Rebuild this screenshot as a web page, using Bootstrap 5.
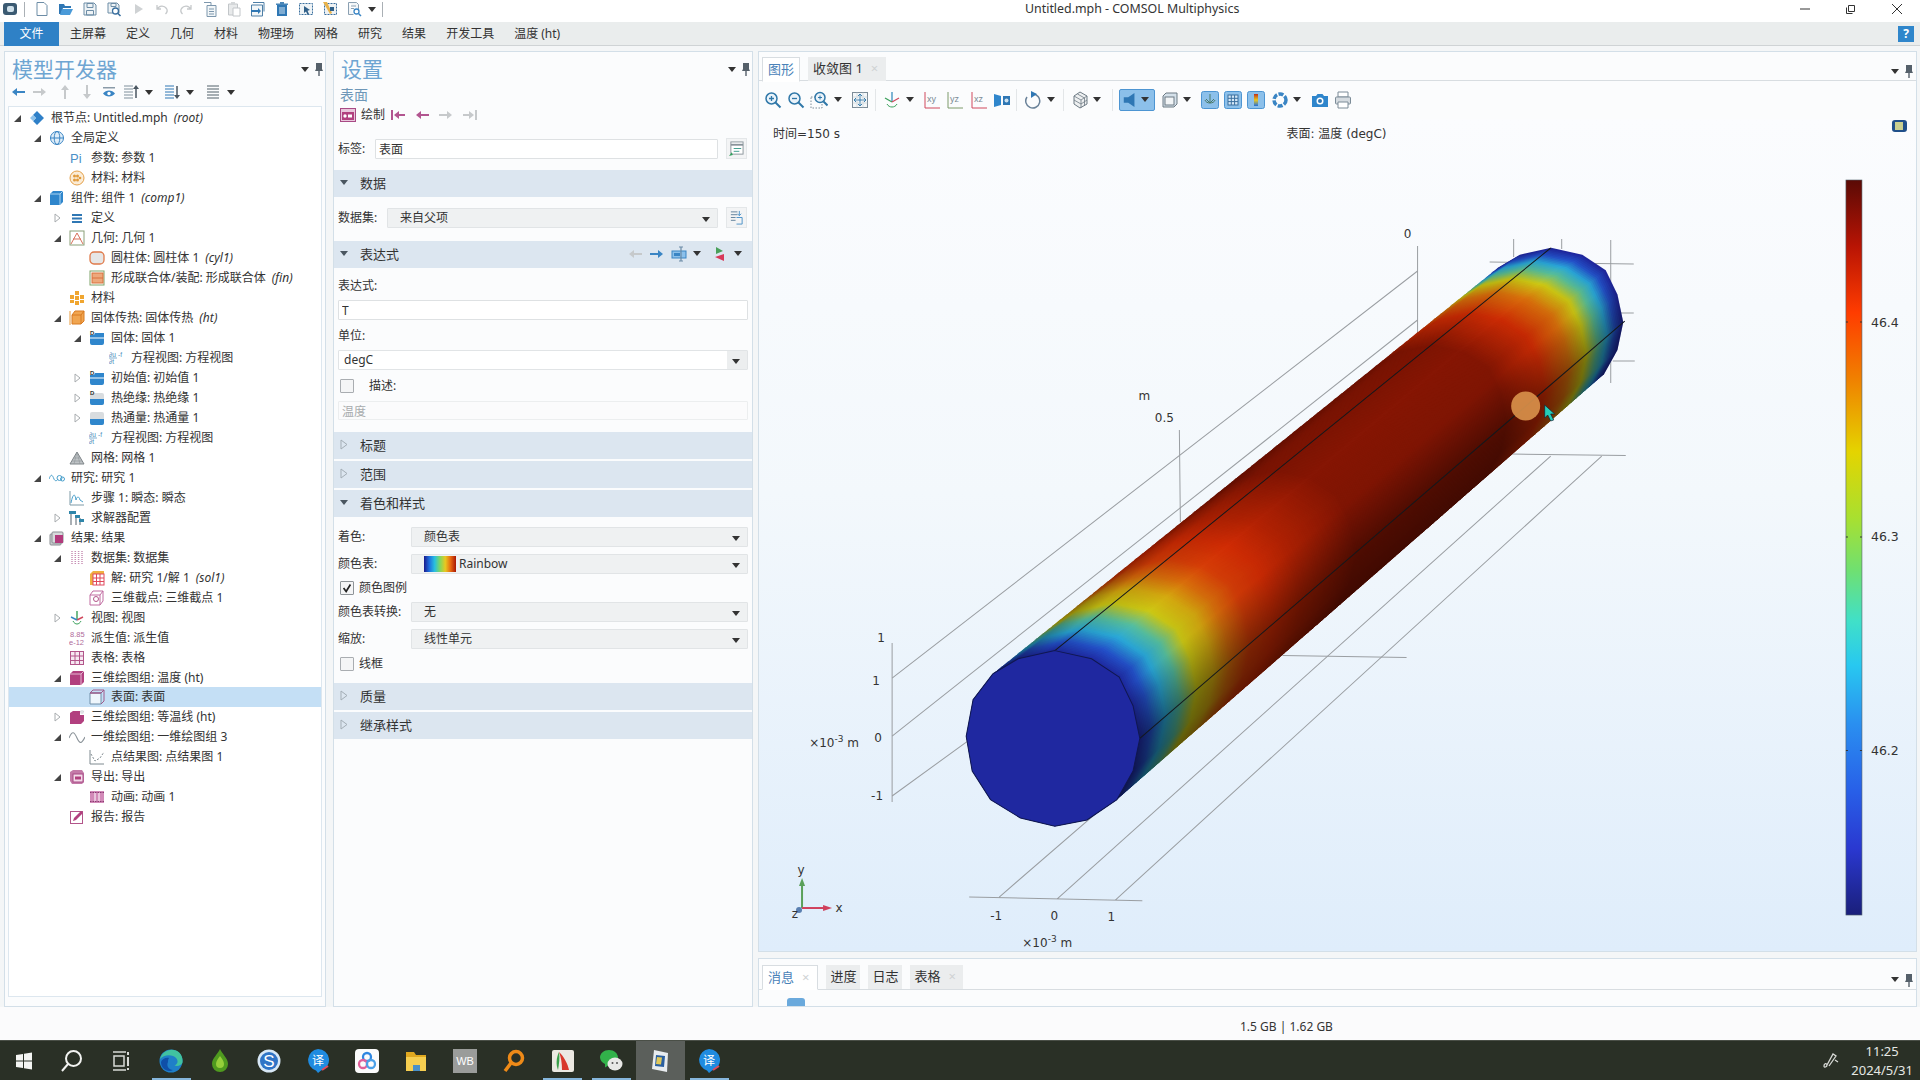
<!DOCTYPE html>
<html lang="zh">
<head>
<meta charset="UTF-8">
<title>Untitled.mph - COMSOL Multiphysics</title>
<link href="https://cdn.jsdelivr.net/npm/bootstrap@5.3.3/dist/css/bootstrap.min.css" rel="stylesheet">
<style>
    html, body { height: 100%; }
    body {
        margin: 0; width: 1920px; height: 1080px; overflow: hidden;
        background: #f4f6f7; color: #333; font-size: 12px; line-height: 20px;
        font-family: "Noto Sans", "Noto Sans CJK SC", sans-serif;
    }
    svg { display: block; flex: none; }
    .c-blue { color: #3a85c4; } .c-grey { color: #c6c9cb; } .c-pink { color: #b25590; } .c-dark { color: #55606a; }
    .cs-caret { width: 0; height: 0; flex: none; border: 4px solid transparent; border-top: 5px solid #333; border-bottom: 0; }

    /* window chrome */
    .cs-title { height: 22px; background: #fff; padding-bottom: 4px; font-size: 12.4px; }
    .cs-quick { width: 1025px; padding-left: 2px; gap: 8px; }
    .cs-quick svg { width: 16px; height: 16px; }
    .cs-quick .cs-sep { width: 1px; height: 15px; background: #aab0b5; margin: 0 1px 0 -2px; }
    .cs-winbtn { width: 46px; }
    .cs-ribbon { height: 24px; background: #eaeded; border-bottom: 1px solid #cfd3d5; padding-left: 4px; flex-wrap: nowrap; }
    .cs-ribbon .nav-link { padding: 0 10px; color: #333; line-height: 24px; font-size: 12px; }
    .cs-ribbon .nav-link.active { background: #2f81c6; color: #fff; width: 55px; text-align: center; margin-right: 1px; }
    .cs-help { width: 16px; height: 16px; background: #2f86cb; color: #fff; line-height: 16px; text-align: center; font-weight: 700; font-size: 12px; margin-right: 6px; }

    /* panes */
    .cs-main { padding: 5px 3px 0 4px; min-height: 0; }
    .cs-pane { background: #fbfcfd; border: 1px solid #d3dfe8; border-radius: 0; }
    .cs-model { width: 322px; }
    .cs-settings { width: 420px; margin-left: 7px; }
    .cs-right { margin-left: 5px; min-width: 0; }
    .cs-head { height: 31px; padding: 3px 1px 0 7px; }
    .cs-head h2 { font-size: 21px; line-height: 28px; margin: 0; color: #6ea5d2; font-weight: 400; }
    .cs-pin { width: 10px; height: 14px; margin-left: 5px; }
    .cs-tool { height: 18px; padding-left: 5px; gap: 6px; }
    .cs-tool svg { width: 16px; height: 16px; }
    .g3 { margin-left: 3px; } .g5 { margin-left: 5px; } .g1n { margin-left: -2px; }

    /* model tree */
    .cs-treebox { margin: 5px 3px 9px 3px; background: #fff; border: 1px solid #dde7ef; }
    .cs-tree { padding-top: 1px; }
    .cs-tree .list-group-item {
        display: flex; align-items: center; height: 20px; padding: 0 0 0 3px; border: 0;
        background: transparent; color: #333; white-space: nowrap; font-size: 12px; line-height: 20px;
    }
    .cs-tree .list-group-item.active { background: #c4dff5; color: #333; }
    .cs-tree em { margin-left: 6px; }
    .tw { width: 10px; height: 10px; margin-right: 7px; flex: none; }
    .ic { width: 16px; height: 16px; margin-right: 6px; }
    .cs-tree .lv1 { padding-left: 23px; } .cs-tree .lv2 { padding-left: 43px; }
    .cs-tree .lv3 { padding-left: 63px; } .cs-tree .lv4 { padding-left: 83px; }

    /* settings */
    .cs-sub { color: #6e97b8; font-size: 14px; line-height: 16px; padding: 4px 0 0 6px; }
    .cs-drawbar { height: 20px; padding-left: 6px; margin-top: 2px; gap: 5px; }
    .cs-drawbar svg { width: 16px; height: 16px; }
    .cs-form { padding: 0 4px 0 4px; }
    .cs-lab { flex: none; color: #333; line-height: 20px; }
    .cs-cap { line-height: 18px; }
    .w37 { width: 37px; } .w49 { width: 49px; } .w73 { width: 73px; }
    .cs-input.form-control, .cs-input.form-select {
        height: 20px; min-height: 0; padding: 0 3px; font-size: 12px; line-height: 18px; color: #333;
        border: 1px solid #dee1e3; border-radius: 1px; background-color: #fff;
    }
    .cs-input.form-select {
        position: relative; padding-left: 12px; background-image: none;
        background: #eff1f2; border-color: #e1e4e6; display: flex; align-items: center;
    }
    .cs-input.form-select.white { background: #fff; padding-left: 5px; }
    .cs-input .cs-caret { position: absolute; right: 7px; top: 8px; }
    .cs-input.white::after { content: ""; position: absolute; right: 0; top: 0; bottom: 0; width: 20px; background: #eceeef; }
    .cs-input.white .cs-caret { z-index: 1; }
    .cs-input.form-control:disabled { background: #fbfbfc; color: #a8abad; border-color: #eceeef; opacity: 1; height: 19px; }
    .cs-side { width: 21px; height: 21px; flex: none; margin-left: 8px; margin-right: 1px; border: 1px solid #e4e7e9; background: #f3f4f5; display: flex; align-items: center; justify-content: center; }
    .cs-side svg { width: 15px; height: 15px; }
    .cs-sec { height: 27px; padding: 0 0 2px 5px; background: #dce6f0; color: #333; font-size: 13px; }
    .cs-sec .arrow-slot { width: 21px; flex: none; }
    .cs-sec .down { width: 0; height: 0; display: block; border: 4px solid transparent; border-top: 5px solid #4a5660; border-bottom: 0; margin-left: 1px; }
    .cs-sec svg.closed { width: 8px; height: 11px; margin-left: 1px; }
    .cs-sec + .cs-sec { margin-top: 2px; }
    .cs-sec .cs-tool { padding-right: 10px; }
    .cs-chk.form-check-input { width: 14px; height: 14px; margin: 0; flex: none; border: 1px solid #a9adb1; border-radius: 1px; background-color: #f4f5f6; }
    .cs-chk.form-check-input:checked { background-color: #f4f5f6; border-color: #8e9498; background-image: url("data:image/svg+xml,%3csvg xmlns='http://www.w3.org/2000/svg' viewBox='0 0 14 14'%3e%3cpath fill='none' stroke='%23222' stroke-width='2' d='M3 7l3 4 5-8'/%3e%3c/svg%3e"); }
    .cs-chkrow { height: 14px; padding-left: 6px; line-height: 14px; }
    .cs-chkrow label { margin-left: 5px; }
    .cs-chkrow label.far { margin-left: 15px; }
    .m5 { margin-top: 5px; } .m6 { margin-top: 6px; } .m7 { margin-top: 7px; } .m8 { margin-top: 8px; } .m9 { margin-top: 9px; }
    .m10 { margin-top: 10px; } .m11 { margin-top: 11px; } .m12 { margin-top: 12px; } .m13 { margin-top: 13px; } .m14 { margin-top: 14px; }
    .cs-rainbow { width: 32px; height: 16px; margin: 0 3px 0 0; background: linear-gradient(to right,#1a1a8c,#1f6fe0,#28c0e0,#7fd860,#e8c820,#e86810,#a81606); }

    /* tabs */
    .cs-tabs.nav-tabs { height: 29px; padding: 5px 0 0 3px; gap: 8px; border-bottom: 1px solid #d8dde1; position: relative; flex-wrap: nowrap; }
    .cs-tabs .nav-link { padding: 0 5px; height: 24px; line-height: 23px; border: 0; border-radius: 0; background: #ebedee; color: #333; font-size: 13px; margin: 0; }
    .cs-tabs .nav-link.active { background: #fff; color: #4a82b8; border: 1px solid #d8dde1; border-bottom-color: #fff; margin-bottom: -1px; height: 25px; }
    .cs-tabs .cs-x { color: #cfd2d4; margin: 0 3px 0 8px; font-size: 13px; }
    .cs-tabs .cs-pins { margin-left: auto; padding: 5px 2px 0 0; }
    .cs-gtool { height: 38px; padding-left: 5px; }
    .cs-gtool > * { flex: none; }
    .cs-gtool svg { width: 18px; height: 18px; }
    .cs-gtool .cs-sep { width: 1px; height: 22px; background: #e3e6e8; }
    .l4 { margin-left: 4px; } .l5 { margin-left: 5px; } .l6 { margin-left: 6px; } .l7 { margin-left: 7px; }
    .l8 { margin-left: 8px; } .l9 { margin-left: 9px; } .l10 { margin-left: 10px; } .l11 { margin-left: 11px; }
    .cs-on { background: #8cc0ea; border: 1px solid #4d95d2; border-radius: 2px; height: 22px; width: 36px; display: flex; align-items: center; justify-content: space-between; padding: 0 5px 0 2px; }
    .cs-on svg { width: 16px; }
    .cs-plot { min-height: 0; background: linear-gradient(to bottom,#fbfcfe 0%,#f3f8fc 45%,#dfedfb 100%); }
    .cs-plot svg { width: 100%; height: 100%; }
    .cs-plot text { font-family: "DejaVu Sans", "Noto Sans CJK SC", sans-serif; font-size: 12px; fill: #333; }
    .cs-plot text.big { font-size: 12.5px; }
    .cs-plot tspan.sup { font-size: 9px; }
    .cs-msgpane { height: 49px; margin-top: 6px; }
    .cs-msgpane .cs-tabs.nav-tabs { height: 31px; padding-top: 6px; }
    .cs-msgpane .nav-link:not(.active) { padding: 0 4px; }
    .cs-strip { height: 17px; position: relative; overflow: hidden; }
    .cs-strip i { position: absolute; left: 28px; top: 8px; width: 18px; height: 10px; background: #6aa9dc; border-radius: 3px 3px 0 0; }
    .cs-status { height: 33px; background: #fbfbfc; padding-left: 1240px; line-height: 40px; }

    /* taskbar */
    .cs-task { height: 40px; background: #2a3026; border-top: 1px solid #4a4f47; padding-left: 0; }
    .cs-ts { width: 48.9px; height: 39px; display: flex; align-items: center; justify-content: center; flex: none; position: relative; }
    .cs-ts svg { width: 24px; height: 24px; }
    .cs-ts.lead { width: 48px; }
    .cs-ts.first { margin-left: 3px; }
    .cs-ts.open::after { content: ""; position: absolute; left: 5px; right: 5px; bottom: 0; height: 2px; background: #86b6dc; }
    .cs-ts.cur { background: #5b5f5b; }
    .cs-clock { margin-left: auto; color: #e6e8e4; text-align: center; line-height: 19px; font-size: 13px; padding-right: 7px; }
    .cs-tray { width: 20px; height: 20px; margin-right: 10px; }
</style>
</head>
<body>

<!-- shared icons -->
<svg width="0" height="0" class="position-absolute">
  <defs>
    <symbol id="tw-o" viewBox="0 0 10 10"><path d="M9 2v7H2z" fill="#444"/></symbol>
    <symbol id="tw-c" viewBox="0 0 10 10"><path d="M3 1l5 4-5 4z" fill="#fff" stroke="#a8acaf"/></symbol>
    <symbol id="a-l" viewBox="0 0 16 16"><path d="M2 8l5-4v3h8v2H7v3z" fill="currentColor"/></symbol>
    <symbol id="a-r" viewBox="0 0 16 16"><path d="M14 8L9 4v3H1v2h8v3z" fill="currentColor"/></symbol>
    <symbol id="a-f" viewBox="0 0 16 16"><path d="M1 3h2v10H1zM4 8l5-4v3h6v2H9v3z" fill="currentColor"/></symbol>
    <symbol id="a-e" viewBox="0 0 16 16"><path d="M15 3h-2v10h2zM12 8L7 4v3H1v2h6v3z" fill="currentColor"/></symbol>
    <symbol id="a-u" viewBox="0 0 16 16"><path d="M8 1l4 5H9v9H7V6H4z" fill="currentColor"/></symbol>
    <symbol id="a-d" viewBox="0 0 16 16"><path d="M8 15l4-5H9V1H7v9H4z" fill="currentColor"/></symbol>
    <symbol id="pin" viewBox="0 0 10 14"><path d="M2 1h6v6l1 2H1l1-2zM4.300 9h1.400v5H4.300z" fill="#55606a"/></symbol>
    <!-- quick access -->
    <symbol id="q-app" viewBox="0 0 16 16"><rect x="1" y="2" width="14" height="12" rx="3" fill="#3b5a72"/><rect x="5" y="5" width="7" height="6" rx="2" fill="#cfe0ea"/></symbol>
    <symbol id="q-new" viewBox="0 0 16 16"><path d="M3 1.500h7l3 3v10H3z" fill="#fff" stroke="#6d8da6"/></symbol>
    <symbol id="q-open" viewBox="0 0 16 16"><path d="M1 3h5l1 2h6v2H5l-2 6H1z" fill="#2f77b4"/><path d="M4 8h11l-3 6H2z" fill="#4a9ad8"/></symbol>
    <symbol id="q-save" viewBox="0 0 16 16"><path d="M2 2h10l2 2v10H2z" fill="#eef3f6" stroke="#6d8da6"/><path d="M5 2.500h6v4H5zM4.500 9.500h7V14h-7z" fill="none" stroke="#6d8da6"/></symbol>
    <symbol id="q-saveas" viewBox="0 0 16 16"><path d="M2 2h9l2 2v8H2z" fill="#eef3f6" stroke="#6d8da6"/><path d="M5 2.500h5v3H5z" fill="none" stroke="#6d8da6"/><circle cx="9.500" cy="10" r="3" fill="#fff" stroke="#3a6f9e" stroke-width="1.300"/><path d="M11.500 12l3 3" stroke="#3a6f9e" stroke-width="1.600"/></symbol>
    <symbol id="q-run" viewBox="0 0 16 16"><path d="M5 3l8 5-8 5z" fill="#cfd2d4"/></symbol>
    <symbol id="q-undo" viewBox="0 0 16 16"><path d="M3 4v4h4M3.500 8C5 4.500 10 4 12.500 7.500c1.300 2 .5 4-1 5.500" fill="none" stroke="#c6c9cb" stroke-width="1.300"/></symbol>
    <symbol id="q-redo" viewBox="0 0 16 16"><path d="M13 4v4H9M12.500 8C11 4.500 6 4 3.500 7.500c-1.300 2-.5 4 1 5.500" fill="none" stroke="#c6c9cb" stroke-width="1.300"/></symbol>
    <symbol id="q-copy" viewBox="0 0 16 16"><path d="M2 1.500h7v3" fill="none" stroke="#7d97ad"/><path d="M5 4.500h9v11H5z" fill="#f2f6f8" stroke="#7d97ad"/><path d="M7 8h5M7 10.500h5M7 13h5" stroke="#7d97ad"/></symbol>
    <symbol id="q-paste" viewBox="0 0 16 16"><path d="M2.500 3h9v11h-9z" fill="#e8eaeb" stroke="#c2c6c9"/><rect x="5" y="1" width="4" height="3" fill="#d4d7d9"/><path d="M7 7h7v8H7z" fill="#fff" stroke="#c2c6c9"/></symbol>
    <symbol id="q-dup" viewBox="0 0 16 16"><path d="M3 1.500h11v9" fill="none" stroke="#4d7ea6"/><path d="M1.500 4h11v11h-11z" fill="#f2f6f8" stroke="#4d7ea6"/><path d="M1 9h7V7l3 3-3 3v-2H1z" fill="#2f77b4"/></symbol>
    <symbol id="q-del" viewBox="0 0 16 16"><path d="M3 4h10v11H3z" fill="#2f77b4"/><path d="M2 2.500h12V4H2zM6 1h4v1.500H6z" fill="#4a86b8"/><path d="M6 6v7M8 6v7M10 6v7" stroke="#cfe2f0"/></symbol>
    <symbol id="q-a" viewBox="0 0 16 16"><rect x="1.500" y="2.500" width="13" height="11" fill="#eef3f6" stroke="#3a6f9e" stroke-dasharray="2 1"/><path d="M6 5l6 4-2.500.7L11 13l-1.500.7L8 10.500 6 12z" fill="#2f5f88"/></symbol>
    <symbol id="q-b" viewBox="0 0 16 16"><rect x="2.500" y="2.500" width="12" height="11" fill="#eef1f3" stroke="#3a6f9e" stroke-dasharray="2 1"/><path d="M1 1l7 12 2-1-5-11z" fill="#e8b24a"/><rect x="8" y="6" width="4" height="4" fill="#2f5f88"/></symbol>
    <symbol id="q-c" viewBox="0 0 16 16"><path d="M2.500 1.500h8l2 2v5M2.500 1.500v12h5" fill="#f2f5f7" stroke="#8ba0b2"/><path d="M5 5h5M5 7.500h3" stroke="#8ba0b2"/><circle cx="10.500" cy="10.500" r="2.500" fill="#fff" stroke="#3a85c4" stroke-width="1.300"/><path d="M12.500 12.500l2.500 2.500" stroke="#3a85c4" stroke-width="1.500"/></symbol>
    <!-- model toolbar -->
    <symbol id="m-eye" viewBox="0 0 16 16"><path d="M2 3h12v1.500H2z" fill="#8a9ba8"/><path d="M2 9.500c3-4 9-4 12 0-3 4-9 4-12 0z" fill="#3a85c4"/><circle cx="8" cy="9.500" r="1.700" fill="#fff"/></symbol>
    <symbol id="m-ua" viewBox="0 0 16 16"><path d="M1 2h9M1 5h9M1 8h9M1 11h9M1 14h9" stroke="#7f8f9b"/><path d="M13 14V4" stroke="#4a5660" stroke-width="1.500"/><path d="M13 1l3 4h-6z" fill="#4a5660"/></symbol>
    <symbol id="m-da" viewBox="0 0 16 16"><path d="M1 2h9M1 5h9M1 8h9M1 11h9M1 14h9" stroke="#2f77b4"/><path d="M13 2v10" stroke="#4a5660" stroke-width="1.500"/><path d="M13 15l3-4h-6z" fill="#4a5660"/></symbol>
    <symbol id="m-ls" viewBox="0 0 16 16"><path d="M2 2h12M2 5h12M2 8h12M2 11h12M2 14h12" stroke="#8a949b" stroke-width="1.500"/></symbol>
    <!-- tree -->
    <symbol id="t-root" viewBox="0 0 16 16"><path d="M8 1l7 7-7 7-4-4 3-3-3-3z" fill="#2f80c8"/><path d="M4 5l3 3-3 3-3-3z" fill="#8ec2ea"/></symbol>
    <symbol id="t-globe" viewBox="0 0 16 16"><circle cx="8" cy="8" r="6.500" fill="#e0eef9" stroke="#3a85c4"/><ellipse cx="8" cy="8" rx="2.800" ry="6.500" fill="none" stroke="#3a85c4"/><path d="M1.500 8h13" stroke="#3a85c4"/></symbol>
    <symbol id="t-pi" viewBox="0 0 16 16"><text x="1" y="13" font-size="13" fill="#4a90c8" font-family="Liberation Sans">Pi</text></symbol>
    <symbol id="t-matc" viewBox="0 0 16 16"><circle cx="8" cy="8" r="7" fill="#fbecd6" stroke="#e5a14a"/><g fill="#e09a3a"><circle cx="5.500" cy="6" r="1.500"/><circle cx="8.500" cy="6" r="1.500"/><circle cx="11" cy="8" r="1.300"/><circle cx="5.500" cy="10" r="1.500"/><circle cx="8.500" cy="10" r="1.500"/></g></symbol>
    <symbol id="t-comp" viewBox="0 0 16 16"><path d="M4 1h10v11l-3 3H1V4z" fill="#2f86cc"/><path d="M1 4h10v11M11 4l3-3" fill="none" stroke="#a9d2f0"/></symbol>
    <symbol id="t-def" viewBox="0 0 16 16"><path d="M3 4h10v2H3zM3 7.500h10v2H3zM3 11h10v2H3z" fill="#2f77b4"/></symbol>
    <symbol id="t-geo" viewBox="0 0 16 16"><rect x="1" y="1" width="14" height="14" fill="#fff" stroke="#8aa078"/><path d="M2 14L8 3l6 11M4 9h8" fill="none" stroke="#d9705a"/></symbol>
    <symbol id="t-cyl" viewBox="0 0 16 16"><rect x="1" y="2" width="14" height="12" rx="4" fill="#e6e6e6" stroke="#e07a4a" stroke-width="1.300"/></symbol>
    <symbol id="t-uni" viewBox="0 0 16 16"><rect x="1" y="1" width="14" height="14" fill="#fff" stroke="#7fa46a"/><rect x="3" y="3" width="11" height="10" fill="#eda87c" stroke="#d9703c"/><path d="M3 8h11" stroke="#d9703c"/></symbol>
    <symbol id="t-matg" viewBox="0 0 16 16"><g fill="#f0a630"><rect x="1" y="5" width="4" height="4"/><rect x="6" y="1" width="4" height="4"/><rect x="6" y="6" width="4" height="4"/><rect x="6" y="11" width="4" height="4"/><rect x="11" y="5" width="4" height="4"/><rect x="1" y="10" width="4" height="3"/><rect x="11" y="10" width="4" height="3"/></g></symbol>
    <symbol id="t-ht" viewBox="0 0 16 16"><path d="M1 1v14" stroke="#e89a3a"/><path d="M6 1h9v10l-3 3H3V5z" fill="#f0a550" stroke="#d97a20"/><path d="M3 5h9v9M12 5l3-4" fill="none" stroke="#d97a20"/></symbol>
    <symbol id="t-dom" viewBox="0 0 16 16"><path d="M1 5h4l1-2h9v10a2 2 0 0 1-2 2H3a2 2 0 0 1-2-2z" fill="#2f86cc"/><path d="M1 8h14" stroke="#fff"/><text x="1" y="5" font-size="6" font-weight="700" fill="#333" font-family="Liberation Sans">D</text></symbol>
    <symbol id="t-domb" viewBox="0 0 16 16"><rect x="1" y="3" width="14" height="12" rx="2" fill="#d8dcdf"/><path d="M1 9h14v4a2 2 0 0 1-2 2H3a2 2 0 0 1-2-2z" fill="#2f86cc"/><text x="1" y="5" font-size="6" font-weight="700" fill="#333" font-family="Liberation Sans">D</text></symbol>
    <symbol id="t-domc" viewBox="0 0 16 16"><rect x="1" y="2" width="14" height="13" rx="2" fill="#d8dcdf"/><path d="M1 9h14v4a2 2 0 0 1-2 2H3a2 2 0 0 1-2-2z" fill="#2f86cc"/></symbol>
    <symbol id="t-eq" viewBox="0 0 16 16"><g font-size="6.500" fill="#4a8dbb" font-family="Liberation Sans"><text x="0" y="7">∂u</text><text x="0" y="14">∂t</text><text x="9" y="7">-f</text></g><path d="M0 8h8" stroke="#4a8dbb" stroke-width=".7"/></symbol>
    <symbol id="t-mesh" viewBox="0 0 16 16"><path d="M8 2l7 12H1z" fill="#bfc3c6" stroke="#7f8589"/><path d="M4.500 8h7M3 11h10M8 2l-3 12M8 2l3 12" stroke="#8f9599" stroke-width=".6" fill="none"/></symbol>
    <symbol id="t-study" viewBox="0 0 16 16"><path d="M0 9c2-5 3-5 5 0 1 2.500 3 2 4 0" fill="none" stroke="#4aa0cc"/><circle cx="10.500" cy="8" r="2.500" fill="none" stroke="#4aa0cc"/><circle cx="13.500" cy="9" r="2" fill="none" stroke="#4aa0cc"/></symbol>
    <symbol id="t-step" viewBox="0 0 16 16"><path d="M1 1v14h14" fill="none" stroke="#7f9aa6"/><path d="M2 13C4 3 6 3 7 10c1-4 3-4 4 0l3 2" fill="none" stroke="#4aa0cc"/></symbol>
    <symbol id="t-solv" viewBox="0 0 16 16"><path d="M2 1v14M7 5v10M11 8v7" stroke="#55606a"/><path d="M0 1h7v3H0zM6 5h5v3H6zM10 9h5v3h-5z" fill="#2f86aa"/></symbol>
    <symbol id="t-res" viewBox="0 0 16 16"><rect x="1" y="4" width="11" height="11" rx="1" fill="#c9ccce" stroke="#8a8f93"/><rect x="3" y="2" width="11" height="11" rx="1" fill="#d8dadc" stroke="#8a8f93"/><rect x="6" y="5" width="8" height="8" fill="#b23a7c"/></symbol>
    <symbol id="t-ds" viewBox="0 0 16 16"><g stroke="#c78fb4" stroke-dasharray="1 1" stroke-width="1.500"><path d="M3 1v14M6.300 1v14M9.600 1v14M13 1v14"/></g></symbol>
    <symbol id="t-sol" viewBox="0 0 16 16"><path d="M1 4l3-3h11v11l-3 3H1z" fill="#f0b040"/><rect x="4" y="4" width="11" height="11" fill="#fff" stroke="#e0485c"/><path d="M4 8h11M4 11.500h11M7.500 4v11M11 4v11" stroke="#e0485c"/></symbol>
    <symbol id="t-cut" viewBox="0 0 16 16"><path d="M4 1h10v10l-3 4H1V5z" fill="#fff" stroke="#c06aa0"/><path d="M1 5h10v10M11 5l3-4" fill="none" stroke="#c06aa0"/><circle cx="7" cy="9" r="2.500" fill="none" stroke="#b2558a"/></symbol>
    <symbol id="t-view" viewBox="0 0 16 16"><path d="M8 1v9" stroke="#3aa05a" stroke-width="1.400"/><path d="M8 10l6-3" stroke="#d0485c" stroke-width="1.400"/><path d="M8 10L2 7" stroke="#3a85c4" stroke-width="1.400"/><path d="M4 11c2 4 6 4 8 0" fill="none" stroke="#3aa05a"/></symbol>
    <symbol id="t-der" viewBox="0 0 16 16"><g font-size="7.500" fill="#b06a9a" font-family="Liberation Sans"><text x="1" y="7">8.85</text><text x="0" y="15">e-12</text></g></symbol>
    <symbol id="t-tbl" viewBox="0 0 16 16"><rect x="1.500" y="1.500" width="13" height="13" fill="#f6e8f1" stroke="#b2558a"/><path d="M1.500 6h13M1.500 10.500h13M6 1.500v13M10.500 1.500v13" stroke="#b2558a"/></symbol>
    <symbol id="t-p3" viewBox="0 0 16 16"><path d="M4 1h11v11l-3 3H1V4z" fill="#b2407f"/><path d="M1 4h11v11M12 4l3-3" fill="none" stroke="#e3b6d0"/></symbol>
    <symbol id="t-sf" viewBox="0 0 16 16"><path d="M1 4h11v11H1z" fill="#eef6fc" stroke="#6e8ea8"/><path d="M1 4l3-3h11v11l-3 3M12 4l3-3" fill="none" stroke="#a05a8a"/><path d="M1 4h11" stroke="#a05a8a" stroke-width="1.400"/></symbol>
    <symbol id="t-pc" viewBox="0 0 16 16"><path d="M4 2h7v4h4v6l-3 3H1V4z" fill="#b2407f"/><path d="M11 2l2 2 2-2" stroke="#9a9a9a" fill="none"/><circle cx="13" cy="3" r="2" fill="#dfe3e6"/></symbol>
    <symbol id="t-w1" viewBox="0 0 16 16"><path d="M0 9c3-7 5-7 8 0s5 5 8-1" fill="none" stroke="#8a9298" stroke-width="1.100"/></symbol>
    <symbol id="t-pt" viewBox="0 0 16 16"><path d="M1 1v14h14" fill="none" stroke="#7f8a90"/><path d="M2 5l4 7 5-3 4-6" fill="none" stroke="#7f8a90" stroke-dasharray="2 1.500"/></symbol>
    <symbol id="t-exp" viewBox="0 0 16 16"><path d="M1 3l3-2h9l2 3v9l-2 2H3l-2-3z" fill="#c47aa8"/><rect x="4" y="5" width="10" height="8" fill="#f4dbe9" stroke="#a84a85"/><path d="M6 7.500h6v3H6z" fill="#b2407f"/></symbol>
    <symbol id="t-anim" viewBox="0 0 16 16"><rect x="1" y="2" width="14" height="12" fill="#d28ab8"/><path d="M6 4v8M10 4v8" stroke="#fff"/><path d="M1 3.500h14M1 12.500h14" stroke="#8a3a72" stroke-dasharray="1.500 1"/></symbol>
    <symbol id="t-rep" viewBox="0 0 16 16"><rect x="1.500" y="2.500" width="12" height="12" fill="#fff" stroke="#b2558a"/><path d="M4 12l1-3 7-7 2 2-7 7z" fill="#b2407f"/></symbol>
    <!-- settings -->
    <symbol id="s-plot" viewBox="0 0 16 16"><rect x=".5" y="1.500" width="15" height="13" fill="#e9c7dc" stroke="#a84a85"/><rect x="2" y="5" width="12" height="8" fill="#b2407f"/><circle cx="5" cy="9" r="1.700" fill="#fff"/><rect x="8" y="7.500" width="4" height="3" fill="#fff"/></symbol>
    <symbol id="s-lab" viewBox="0 0 16 16"><rect x="2" y="1" width="13" height="13" fill="#fff" stroke="#8a949b"/><path d="M2 4h13" stroke="#8a949b" stroke-width="2"/><path d="M5 8h8M5 11h6" stroke="#3a9a8a"/><path d="M0 16l3-4 1 3z" fill="#2fa05a"/></symbol>
    <symbol id="s-ds" viewBox="0 0 16 16"><path d="M2 2h7M2 5h7M2 8h5M2 11h5" stroke="#5f7f9a"/><path d="M8 8h6v7H8" fill="none" stroke="#4a90c8"/><path d="M11 1v5M9 4l2 2 2-2" stroke="#4a90c8" fill="none"/></symbol>
    <symbol id="s-ins" viewBox="0 0 16 16"><rect x="1" y="5" width="14" height="7" fill="#8cc0ea" stroke="#3a85c4"/><rect x="3" y="7" width="6" height="3" fill="#3a85c4"/><path d="M10 1v14M8 1h4M8 15h4" stroke="#6a8aa5" stroke-width="1.200"/></symbol>
    <symbol id="s-flag" viewBox="0 0 16 16"><path d="M4 1l7 4-7 3z" fill="#4aa05a"/><path d="M12 8v7L3 11z" fill="#d83a5a"/></symbol>
    <!-- graphics toolbar -->
    <symbol id="g-zi" viewBox="0 0 18 18"><circle cx="7.500" cy="7.500" r="5.500" fill="#eaf3fa" stroke="#2f77a8" stroke-width="1.500"/><path d="M5 7.500h5M7.500 5v5" stroke="#2f77a8" stroke-width="1.300"/><path d="M11.500 11.500l5 5" stroke="#2f77a8" stroke-width="2"/></symbol>
    <symbol id="g-zo" viewBox="0 0 18 18"><circle cx="7.500" cy="7.500" r="5.500" fill="#eaf3fa" stroke="#2f77a8" stroke-width="1.500"/><path d="M5 7.500h5" stroke="#2f77a8" stroke-width="1.300"/><path d="M11.500 11.500l5 5" stroke="#2f77a8" stroke-width="2"/></symbol>
    <symbol id="g-zb" viewBox="0 0 18 18"><rect x="1" y="6" width="11" height="11" fill="none" stroke="#7c8c98" stroke-dasharray="1.500 1.500"/><circle cx="10" cy="6.500" r="5" fill="#eaf3fa" stroke="#2f77a8" stroke-width="1.500"/><path d="M8 6.500h4M10 4.500v4" stroke="#2f77a8"/><path d="M13.500 10.500l4 4" stroke="#2f77a8" stroke-width="2"/></symbol>
    <symbol id="g-fit" viewBox="0 0 18 18"><rect x="1.500" y="1.500" width="15" height="15" fill="#f4f7f9" stroke="#7c8c98"/><path d="M9 3v12M3 9h12" stroke="#3a7fae"/><path d="M7 5l2-2 2 2M7 13l2 2 2-2M5 7L3 9l2 2M13 7l2 2-2 2" fill="none" stroke="#3a7fae"/><path d="M6 1.500v15M12 1.500v15M1.500 6h15M1.500 12h15" stroke="#c4ccd2" stroke-width=".6"/></symbol>
    <symbol id="g-ax" viewBox="0 0 18 18"><path d="M9 1v10" stroke="#3a8fbe" stroke-width="1.300"/><path d="M9 11L2 7" stroke="#3aa05a" stroke-width="1.300"/><path d="M9 11l7-4" stroke="#d0485c" stroke-width="1.300"/><path d="M4 13c2 4 8 4 10 0" fill="none" stroke="#3aa05a"/></symbol>
    <symbol id="g-xy" viewBox="0 0 18 18"><path d="M2 1v16h15" fill="none" stroke="#d0485c"/><text x="4" y="11" font-size="9" fill="#7a8a95" font-family="Liberation Sans">xy</text></symbol>
    <symbol id="g-yz" viewBox="0 0 18 18"><path d="M2 1v16h15" fill="none" stroke="#7c9a6a"/><text x="4" y="11" font-size="9" fill="#7a8a95" font-family="Liberation Sans">yz</text></symbol>
    <symbol id="g-xz" viewBox="0 0 18 18"><path d="M2 1v16h15" fill="none" stroke="#d0485c"/><text x="4" y="11" font-size="9" fill="#7a8a95" font-family="Liberation Sans">xz</text></symbol>
    <symbol id="g-go" viewBox="0 0 18 18"><path d="M1 3l7 2v9l-7 2z" fill="#2f86cc"/><path d="M10 5h7v9h-7z" fill="#2f77b4"/><circle cx="13.500" cy="9.500" r="2" fill="#cfe2f0"/></symbol>
    <symbol id="g-rot" viewBox="0 0 18 18"><path d="M10 3a7 7 0 1 1-6 3" fill="none" stroke="#6a8299" stroke-width="1.500"/><path d="M8 0l6 3-6 4z" fill="#2f77b4"/></symbol>
    <symbol id="g-wire" viewBox="0 0 18 18"><path d="M3 5l6-4 7 4v8l-7 4-6-4z" fill="#eef0f1" stroke="#6d7a84"/><path d="M3 5l7 4 6-4M10 9v8M6.500 3l7 4v8M3 9l7 4 6-4" fill="none" stroke="#6d7a84" stroke-width=".8"/></symbol>
    <symbol id="g-light" viewBox="0 0 18 18"><path d="M2 6h5l7-5v16l-7-5H2z" fill="#2f77b4"/></symbol>
    <symbol id="g-box" viewBox="0 0 18 18"><path d="M5 2h11v11l-3 3H2V5z" fill="#d5e1ea" stroke="#6d7a84"/><rect x="4" y="6" width="9" height="8" fill="#f2f5f7" stroke="#6d7a84"/></symbol>
    <symbol id="g-tax" viewBox="0 0 18 18"><rect x=".5" y=".5" width="17" height="17" rx="2" fill="#8cc0ea" stroke="#4d95d2"/><path d="M9 3v9M4 9c1 4 9 4 10 0M9 12L5 8M9 12l4-4" fill="none" stroke="#4a7a6a"/></symbol>
    <symbol id="g-tgr" viewBox="0 0 18 18"><rect x=".5" y=".5" width="17" height="17" rx="2" fill="#8cc0ea" stroke="#4d95d2"/><rect x="4" y="4" width="10" height="10" fill="#d5e8f7" stroke="#3a6f9e"/><path d="M7.300 4v10M10.600 4v10M4 7.300h10M4 10.600h10" stroke="#3a6f9e"/></symbol>
    <symbol id="g-tleg" viewBox="0 0 18 18"><defs><linearGradient id="lgm" x1="0" y1="0" x2="0" y2="1"><stop offset="0" stop-color="#c0301a"/><stop offset=".5" stop-color="#e8c820"/><stop offset="1" stop-color="#1f6fe0"/></linearGradient></defs><rect x=".5" y=".5" width="17" height="17" rx="2" fill="#8cc0ea" stroke="#4d95d2"/><rect x="7" y="3" width="4" height="12" fill="url(#lgm)"/></symbol>
    <symbol id="g-scene" viewBox="0 0 18 18"><circle cx="9" cy="9" r="6" fill="none" stroke="#3a85c4" stroke-width="3.500" stroke-dasharray="5 1.500"/></symbol>
    <symbol id="g-cam" viewBox="0 0 18 18"><path d="M1 5h4l1.500-2h5L13 5h4v11H1z" fill="#2f86cc"/><circle cx="9" cy="10" r="3.500" fill="#fff"/><circle cx="9" cy="10" r="2" fill="#2f77b4"/></symbol>
    <symbol id="g-prt" viewBox="0 0 18 18"><path d="M4 1h10v5H4z" fill="#fff" stroke="#7c8c98"/><rect x="1.500" y="6" width="15" height="7" rx="1" fill="#d5dbe0" stroke="#7c8c98"/><path d="M4 11h10v6H4z" fill="#fff" stroke="#7c8c98"/></symbol>
    <!-- taskbar -->
    <symbol id="b-win" viewBox="0 0 24 24"><path d="M4 6l7-1v6.500H4zM12 4.800l8-1.300v8h-8zM4 12.500h7V19l-7-1zM12 12.500h8v8l-8-1.300z" fill="#f4f5f3"/></symbol>
    <symbol id="b-find" viewBox="0 0 24 24"><circle cx="13.500" cy="9.500" r="7.500" fill="none" stroke="#f2f3f1" stroke-width="2"/><path d="M8 15l-6 7" stroke="#f2f3f1" stroke-width="2"/></symbol>
    <symbol id="b-tv" viewBox="0 0 24 24"><path d="M5 3h13M5 21h13" stroke="#d8dad6" stroke-width="1.500"/><rect x="6" y="7" width="10" height="10" fill="none" stroke="#d8dad6" stroke-width="1.500"/><path d="M20 3v3M20 8v9M20 19v2" stroke="#d8dad6" stroke-width="2"/></symbol>
    <symbol id="b-edge" viewBox="0 0 24 24"><circle cx="12" cy="12" r="11.500" fill="#1f7fc8"/><path d="M1 10C3 3 10-1 17 1.500c5 2 7 7 6.500 12-1 3-5 4-8 3 3-1 4-4 2-7C14 5 5 5 1 10z" fill="#41c2a0"/><path d="M9 13c-2 4 1 8 5 8-5 3-12-1-12-8 1-3 5-5 8-4-1 1-1 3-1 4z" fill="#0f4fa8"/></symbol>
    <symbol id="b-leaf" viewBox="0 0 24 24"><path d="M12 0c2 5 8 9 8 15a8 8 0 0 1-16 0C4 9 10 5 12 0z" fill="#4f9a1f"/><path d="M12 7c2 3 4 5 4 8a4 4 0 0 1-8 0c0-3 2-5 4-8z" fill="#96cf3a"/></symbol>
    <symbol id="b-sg" viewBox="0 0 24 24"><circle cx="12" cy="12" r="11.500" fill="#d8e8f6"/><circle cx="12" cy="12" r="9" fill="#2f74c6"/><text x="12" y="18" text-anchor="middle" font-size="17" font-family="Liberation Sans" fill="#fff">S</text></symbol>
    <symbol id="b-tr" viewBox="0 0 24 24"><path d="M12 0a11 11 0 0 1 3 21.600L12 24l-2-2.500A11 11 0 0 1 12 0z" fill="#1f8be0"/><text x="12" y="16" text-anchor="middle" font-size="12" fill="#fff" font-family="Noto Sans CJK SC">译</text><path d="M16 21l6-4" stroke="#e0485c" stroke-width="2"/></symbol>
    <symbol id="b-bd" viewBox="0 0 24 24"><rect width="24" height="24" rx="4" fill="#fbfbfb"/><circle cx="12" cy="8" r="4" fill="none" stroke="#2f86e0" stroke-width="2.300"/><circle cx="8" cy="15" r="4" fill="none" stroke="#e0609a" stroke-width="2.300"/><circle cx="16" cy="15" r="4" fill="none" stroke="#4aa0e8" stroke-width="2.300"/></symbol>
    <symbol id="b-fd" viewBox="0 0 24 24"><path d="M2 3h8l2 3h10v4H2z" fill="#e0a820"/><rect x="2" y="8" width="20" height="14" fill="#f6ce50"/><rect x="9" y="16" width="7" height="6" fill="#4a90c8"/></symbol>
    <symbol id="b-wb" viewBox="0 0 24 24"><rect width="24" height="24" fill="#9a9c9a"/><text x="12" y="16" text-anchor="middle" font-size="11" font-family="Liberation Sans" fill="#fff">WB</text></symbol>
    <symbol id="b-og" viewBox="0 0 24 24"><circle cx="14" cy="9" r="6.500" fill="none" stroke="#ee8a18" stroke-width="3.500"/><path d="M9 14l-6 8" stroke="#ee8a18" stroke-width="3.500"/></symbol>
    <symbol id="b-rg" viewBox="0 0 24 24"><rect x="1" y="1" width="22" height="22" rx="2" fill="#ece9e2"/><path d="M8 3c-3 6-3 13-1 18 1-6 2-12 1-18z" fill="#3aa04a"/><path d="M8 3c4 3 9 12 10 18h-7C11 14 10 8 8 3z" fill="#d8382a"/></symbol>
    <symbol id="b-wc" viewBox="0 0 24 24"><path d="M10 1c5 0 9 3.500 9 7.500S15 16 10 16l-4 2.500V15c-3-1.500-5-4-5-6.500C1 4.500 5 1 10 1z" fill="#32b24a"/><ellipse cx="16" cy="15" rx="7.500" ry="6.500" fill="#e8e8e6"/><circle cx="13.500" cy="14" r="1" fill="#555"/><circle cx="18" cy="14" r="1" fill="#555"/></symbol>
    <symbol id="b-cm" viewBox="0 0 24 24"><path d="M6 1l14 3-1 19-15-3z" fill="#e8ecef"/><path d="M8 6l9 1-1 11-9-1z" fill="#2a5fa0"/><path d="M9 8l5 .5-1 7-5-.5z" fill="#e0c85a"/></symbol>
  </defs>
</svg>

<div class="d-flex flex-column" style="height:1080px">

  <!-- title bar -->
  <header class="cs-title d-flex align-items-center">
    <div class="cs-quick d-flex align-items-center">
      <svg><use href="#q-app"/></svg><span class="cs-sep"></span>
      <svg><use href="#q-new"/></svg><svg><use href="#q-open"/></svg><svg><use href="#q-save"/></svg><svg><use href="#q-saveas"/></svg>
      <svg><use href="#q-run"/></svg><svg><use href="#q-undo"/></svg><svg><use href="#q-redo"/></svg><svg><use href="#q-copy"/></svg>
      <svg><use href="#q-paste"/></svg><svg><use href="#q-dup"/></svg><svg><use href="#q-del"/></svg><svg><use href="#q-a"/></svg>
      <svg><use href="#q-b"/></svg><svg><use href="#q-c"/></svg><span class="cs-caret g1n"></span><span class="cs-sep"></span>
    </div>
    <div>Untitled.mph - COMSOL Multiphysics</div>
    <div class="d-flex ms-auto">
      <div class="cs-winbtn d-flex justify-content-center"><svg width="12" height="12"><path d="M1 6h10" stroke="#333"/></svg></div>
      <div class="cs-winbtn d-flex justify-content-center"><svg width="12" height="12"><path d="M3.500 2.500h6v6h-6zM1.500 4.500v6h6" fill="#fff" stroke="#333"/></svg></div>
      <div class="cs-winbtn d-flex justify-content-center"><svg width="12" height="12"><path d="M1 1l10 10M11 1L1 11" stroke="#333"/></svg></div>
    </div>
  </header>

  <!-- ribbon tabs -->
  <nav class="nav cs-ribbon align-items-center">
    <a class="nav-link active" href="#">文件</a>
    <a class="nav-link" href="#">主屏幕</a>
    <a class="nav-link" href="#">定义</a>
    <a class="nav-link" href="#">几何</a>
    <a class="nav-link" href="#">材料</a>
    <a class="nav-link" href="#">物理场</a>
    <a class="nav-link" href="#">网格</a>
    <a class="nav-link" href="#">研究</a>
    <a class="nav-link" href="#">结果</a>
    <a class="nav-link" href="#">开发工具</a>
    <a class="nav-link" href="#">温度 (ht)</a>
    <span class="cs-help ms-auto">?</span>
  </nav>

  <main class="cs-main d-flex flex-grow-1">

    <!-- model builder -->
    <section class="cs-pane cs-model d-flex flex-column">
      <div class="cs-head d-flex align-items-center">
        <h2>模型开发器</h2><span class="cs-caret ms-auto"></span><svg class="cs-pin"><use href="#pin"/></svg>
      </div>
      <div class="cs-tool d-flex align-items-center">
        <svg class="c-blue"><use href="#a-l"/></svg><svg class="c-grey"><use href="#a-r"/></svg>
        <svg class="c-grey g3"><use href="#a-u"/></svg><svg class="c-grey"><use href="#a-d"/></svg>
        <svg><use href="#m-eye"/></svg><svg><use href="#m-ua"/></svg><span class="cs-caret"></span>
        <svg class="g5"><use href="#m-da"/></svg><span class="cs-caret"></span>
        <svg class="g5"><use href="#m-ls"/></svg><span class="cs-caret"></span>
      </div>
      <div class="cs-treebox flex-grow-1">
        <ul class="list-group list-group-flush cs-tree">
          <li class="list-group-item lv0"><svg class="tw"><use href="#tw-o"/></svg><svg class="ic"><use href="#t-root"/></svg>根节点: Untitled.mph <em>(root)</em></li>
          <li class="list-group-item lv1"><svg class="tw"><use href="#tw-o"/></svg><svg class="ic"><use href="#t-globe"/></svg>全局定义</li>
          <li class="list-group-item lv2"><span class="tw"></span><svg class="ic"><use href="#t-pi"/></svg>参数: 参数 1</li>
          <li class="list-group-item lv2"><span class="tw"></span><svg class="ic"><use href="#t-matc"/></svg>材料: 材料</li>
          <li class="list-group-item lv1"><svg class="tw"><use href="#tw-o"/></svg><svg class="ic"><use href="#t-comp"/></svg>组件: 组件 1 <em>(comp1)</em></li>
          <li class="list-group-item lv2"><svg class="tw"><use href="#tw-c"/></svg><svg class="ic"><use href="#t-def"/></svg>定义</li>
          <li class="list-group-item lv2"><svg class="tw"><use href="#tw-o"/></svg><svg class="ic"><use href="#t-geo"/></svg>几何: 几何 1</li>
          <li class="list-group-item lv3"><span class="tw"></span><svg class="ic"><use href="#t-cyl"/></svg>圆柱体: 圆柱体 1 <em>(cyl1)</em></li>
          <li class="list-group-item lv3"><span class="tw"></span><svg class="ic"><use href="#t-uni"/></svg>形成联合体/装配: 形成联合体 <em>(fin)</em></li>
          <li class="list-group-item lv2"><span class="tw"></span><svg class="ic"><use href="#t-matg"/></svg>材料</li>
          <li class="list-group-item lv2"><svg class="tw"><use href="#tw-o"/></svg><svg class="ic"><use href="#t-ht"/></svg>固体传热: 固体传热 <em>(ht)</em></li>
          <li class="list-group-item lv3"><svg class="tw"><use href="#tw-o"/></svg><svg class="ic"><use href="#t-dom"/></svg>固体: 固体 1</li>
          <li class="list-group-item lv4"><span class="tw"></span><svg class="ic"><use href="#t-eq"/></svg>方程视图: 方程视图</li>
          <li class="list-group-item lv3"><svg class="tw"><use href="#tw-c"/></svg><svg class="ic"><use href="#t-dom"/></svg>初始值: 初始值 1</li>
          <li class="list-group-item lv3"><svg class="tw"><use href="#tw-c"/></svg><svg class="ic"><use href="#t-domb"/></svg>热绝缘: 热绝缘 1</li>
          <li class="list-group-item lv3"><svg class="tw"><use href="#tw-c"/></svg><svg class="ic"><use href="#t-domc"/></svg>热通量: 热通量 1</li>
          <li class="list-group-item lv3"><span class="tw"></span><svg class="ic"><use href="#t-eq"/></svg>方程视图: 方程视图</li>
          <li class="list-group-item lv2"><span class="tw"></span><svg class="ic"><use href="#t-mesh"/></svg>网格: 网格 1</li>
          <li class="list-group-item lv1"><svg class="tw"><use href="#tw-o"/></svg><svg class="ic"><use href="#t-study"/></svg>研究: 研究 1</li>
          <li class="list-group-item lv2"><span class="tw"></span><svg class="ic"><use href="#t-step"/></svg>步骤 1: 瞬态: 瞬态</li>
          <li class="list-group-item lv2"><svg class="tw"><use href="#tw-c"/></svg><svg class="ic"><use href="#t-solv"/></svg>求解器配置</li>
          <li class="list-group-item lv1"><svg class="tw"><use href="#tw-o"/></svg><svg class="ic"><use href="#t-res"/></svg>结果: 结果</li>
          <li class="list-group-item lv2"><svg class="tw"><use href="#tw-o"/></svg><svg class="ic"><use href="#t-ds"/></svg>数据集: 数据集</li>
          <li class="list-group-item lv3"><span class="tw"></span><svg class="ic"><use href="#t-sol"/></svg>解: 研究 1/解 1 <em>(sol1)</em></li>
          <li class="list-group-item lv3"><span class="tw"></span><svg class="ic"><use href="#t-cut"/></svg>三维截点: 三维截点 1</li>
          <li class="list-group-item lv2"><svg class="tw"><use href="#tw-c"/></svg><svg class="ic"><use href="#t-view"/></svg>视图: 视图</li>
          <li class="list-group-item lv2"><span class="tw"></span><svg class="ic"><use href="#t-der"/></svg>派生值: 派生值</li>
          <li class="list-group-item lv2"><span class="tw"></span><svg class="ic"><use href="#t-tbl"/></svg>表格: 表格</li>
          <li class="list-group-item lv2"><svg class="tw"><use href="#tw-o"/></svg><svg class="ic"><use href="#t-p3"/></svg>三维绘图组: 温度 (ht)</li>
          <li class="list-group-item lv3 active"><span class="tw"></span><svg class="ic"><use href="#t-sf"/></svg>表面: 表面</li>
          <li class="list-group-item lv2"><svg class="tw"><use href="#tw-c"/></svg><svg class="ic"><use href="#t-pc"/></svg>三维绘图组: 等温线 (ht)</li>
          <li class="list-group-item lv2"><svg class="tw"><use href="#tw-o"/></svg><svg class="ic"><use href="#t-w1"/></svg>一维绘图组: 一维绘图组 3</li>
          <li class="list-group-item lv3"><span class="tw"></span><svg class="ic"><use href="#t-pt"/></svg>点结果图: 点结果图 1</li>
          <li class="list-group-item lv2"><svg class="tw"><use href="#tw-o"/></svg><svg class="ic"><use href="#t-exp"/></svg>导出: 导出</li>
          <li class="list-group-item lv3"><span class="tw"></span><svg class="ic"><use href="#t-anim"/></svg>动画: 动画 1</li>
          <li class="list-group-item lv2"><span class="tw"></span><svg class="ic"><use href="#t-rep"/></svg>报告: 报告</li>
        </ul>
      </div>
    </section>

    <!-- settings -->
    <section class="cs-pane cs-settings d-flex flex-column">
      <div class="cs-head d-flex align-items-center">
        <h2>设置</h2><span class="cs-caret ms-auto"></span><svg class="cs-pin"><use href="#pin"/></svg>
      </div>
      <div class="cs-sub">表面</div>
      <div class="cs-drawbar d-flex align-items-center">
        <svg><use href="#s-plot"/></svg><span>绘制</span>
        <svg class="c-pink"><use href="#a-f"/></svg><svg class="c-pink g3"><use href="#a-l"/></svg>
        <svg class="c-grey g3"><use href="#a-r"/></svg><svg class="c-grey g3"><use href="#a-e"/></svg>
      </div>

      <div class="cs-form d-flex align-items-center m13">
        <label class="cs-lab w37">标签:</label>
        <input class="form-control cs-input" value="表面">
        <span class="cs-side"><svg><use href="#s-lab"/></svg></span>
      </div>

      <div class="cs-sec d-flex align-items-center m11"><span class="arrow-slot"><span class="down"></span></span>数据</div>
      <div class="cs-form d-flex align-items-center m10">
        <label class="cs-lab w49">数据集:</label>
        <div class="form-select cs-input">来自父项<span class="cs-caret"></span></div>
        <span class="cs-side"><svg><use href="#s-ds"/></svg></span>
      </div>

      <div class="cs-sec d-flex align-items-center m13">
        <span class="arrow-slot"><span class="down"></span></span>表达式
        <div class="cs-tool d-flex align-items-center ms-auto">
          <svg class="c-grey"><use href="#a-l"/></svg><svg class="c-blue"><use href="#a-r"/></svg>
          <svg><use href="#s-ins"/></svg><span class="cs-caret"></span>
          <svg class="g5"><use href="#s-flag"/></svg><span class="cs-caret"></span>
        </div>
      </div>
      <div class="cs-form cs-cap m9">表达式:</div>
      <div class="cs-form m5"><input class="form-control cs-input" value="T"></div>
      <div class="cs-form cs-cap m7">单位:</div>
      <div class="cs-form m5"><div class="form-select cs-input white">degC<span class="cs-caret"></span></div></div>
      <div class="cs-form cs-chkrow d-flex align-items-center m9"><input class="form-check-input cs-chk" type="checkbox"><label class="far">描述:</label></div>
      <div class="cs-form m8"><input class="form-control cs-input" value="温度" disabled></div>

      <div class="cs-sec d-flex align-items-center m12"><span class="arrow-slot"><svg class="closed" viewBox="0 0 8 11"><path d="M1 1l6 4.500-6 4.500z" fill="none" stroke="#a3adb5"/></svg></span>标题</div>
      <div class="cs-sec d-flex align-items-center"><span class="arrow-slot"><svg class="closed" viewBox="0 0 8 11"><path d="M1 1l6 4.500-6 4.500z" fill="none" stroke="#a3adb5"/></svg></span>范围</div>
      <div class="cs-sec d-flex align-items-center"><span class="arrow-slot"><span class="down"></span></span>着色和样式</div>

      <div class="cs-form d-flex align-items-center m10">
        <label class="cs-lab w73">着色:</label><div class="form-select cs-input">颜色表<span class="cs-caret"></span></div>
      </div>
      <div class="cs-form d-flex align-items-center m7">
        <label class="cs-lab w73">颜色表:</label><div class="form-select cs-input"><span class="cs-rainbow"></span>Rainbow<span class="cs-caret"></span></div>
      </div>
      <div class="cs-form cs-chkrow d-flex align-items-center m7"><input class="form-check-input cs-chk" type="checkbox" checked><label>颜色图例</label></div>
      <div class="cs-form d-flex align-items-center m7">
        <label class="cs-lab w73">颜色表转换:</label><div class="form-select cs-input">无<span class="cs-caret"></span></div>
      </div>
      <div class="cs-form d-flex align-items-center m7">
        <label class="cs-lab w73">缩放:</label><div class="form-select cs-input">线性单元<span class="cs-caret"></span></div>
      </div>
      <div class="cs-form cs-chkrow d-flex align-items-center m8"><input class="form-check-input cs-chk" type="checkbox"><label>线框</label></div>

      <div class="cs-sec d-flex align-items-center m12"><span class="arrow-slot"><svg class="closed" viewBox="0 0 8 11"><path d="M1 1l6 4.500-6 4.500z" fill="none" stroke="#a3adb5"/></svg></span>质量</div>
      <div class="cs-sec d-flex align-items-center"><span class="arrow-slot"><svg class="closed" viewBox="0 0 8 11"><path d="M1 1l6 4.500-6 4.500z" fill="none" stroke="#a3adb5"/></svg></span>继承样式</div>
    </section>

    <!-- graphics + messages -->
    <div class="cs-right d-flex flex-column flex-grow-1">
      <section class="cs-pane d-flex flex-column flex-grow-1" style="min-height:0">
        <ul class="nav nav-tabs cs-tabs">
          <li class="nav-item"><a class="nav-link active" href="#">图形</a></li>
          <li class="nav-item"><a class="nav-link" href="#">收敛图 1<span class="cs-x">×</span></a></li>
          <li class="cs-pins d-flex align-items-center"><span class="cs-caret"></span><svg class="cs-pin"><use href="#pin"/></svg></li>
        </ul>
        <div class="cs-gtool d-flex align-items-center">
          <svg><use href="#g-zi"/></svg><svg class="l5"><use href="#g-zo"/></svg><svg class="l5"><use href="#g-zb"/></svg><span class="cs-caret l6"></span>
          <svg class="l9"><use href="#g-fit"/></svg><span class="cs-sep l6"></span>
          <svg class="l7"><use href="#g-ax"/></svg><span class="cs-caret l5"></span>
          <svg class="l9"><use href="#g-xy"/></svg><svg class="l5"><use href="#g-yz"/></svg><svg class="l6"><use href="#g-xz"/></svg><svg class="l5"><use href="#g-go"/></svg>
          <span class="cs-sep l5"></span><svg class="l6"><use href="#g-rot"/></svg><span class="cs-caret l6"></span>
          <span class="cs-sep l8"></span><svg class="l7"><use href="#g-wire"/></svg><span class="cs-caret l4"></span>
          <span class="cs-sep l11"></span>
          <span class="cs-on l6"><svg><use href="#g-light"/></svg><span class="cs-caret"></span></span>
          <svg class="l6"><use href="#g-box"/></svg><span class="cs-caret l4"></span>
          <svg class="l10"><use href="#g-tax"/></svg><svg class="l5"><use href="#g-tgr"/></svg><svg class="l5"><use href="#g-tleg"/></svg>
          <svg class="l6"><use href="#g-scene"/></svg><span class="cs-caret l4"></span>
          <svg class="l10"><use href="#g-cam"/></svg><svg class="l5"><use href="#g-prt"/></svg>
        </div>

        <div class="cs-plot flex-grow-1">
          <svg id="plot" viewBox="760 119 1156 832" preserveAspectRatio="none">
            <defs>
              <linearGradient id="cbar" x1="0" y1="0" x2="0" y2="1">
                <stop offset="0" stop-color="#5a0a05"/><stop offset=".09" stop-color="#b81404"/><stop offset=".18" stop-color="#ff3c00"/>
                <stop offset=".27" stop-color="#f08000"/><stop offset=".37" stop-color="#e4d400"/><stop offset=".46" stop-color="#a8e030"/>
                <stop offset=".53" stop-color="#70e070"/><stop offset=".6" stop-color="#40e0c8"/><stop offset=".66" stop-color="#28c8f0"/>
                <stop offset=".74" stop-color="#2a8ff0"/><stop offset=".83" stop-color="#2860e8"/><stop offset=".91" stop-color="#2a38d0"/>
                <stop offset="1" stop-color="#1a1f7a"/>
              </linearGradient>
              <linearGradient id="shade" gradientUnits="userSpaceOnUse" x1="1244" y1="461" x2="1360" y2="599">
                <stop offset="0" stop-color="#000" stop-opacity=".4"/><stop offset=".1" stop-color="#000" stop-opacity=".1"/>
                <stop offset=".3" stop-color="#000" stop-opacity="0"/><stop offset=".55" stop-color="#000" stop-opacity=".05"/>
                <stop offset=".8" stop-color="#000" stop-opacity=".42"/><stop offset="1" stop-color="#000" stop-opacity=".55"/>
              </linearGradient>
              <clipPath id="cyl-clip"></clipPath>
            </defs>

            <text x="774" y="138">时间=150 s</text>
            <text x="1337" y="138" text-anchor="middle">表面: 温度 (degC)</text>
            <rect x="1892" y="120" width="15" height="12" rx="3" fill="#1f4f8a"/><rect x="1895" y="122" width="8" height="8" fill="#c9cf90"/>

            <!-- grid behind the cylinder -->
            <g stroke="#9a9ea2" stroke-width="1" fill="none">
              <path d="M1418 246V334M1418 271L893 678M1418 320L893 736M1300 500L893 796"/>
              <path d="M1180 430L1181 522M893 643V802"/>
              <path d="M1283 655.500L1407 657.600M1512 454L1626 455.500"/>
              <path d="M1000 897L1512 454M1057.700 899L1551 456M1116 900L1602 456M970 897L1143 900.700"/>
              <path d="M1514 239V257M1562 239V249M1611 240V383M1490 262L1634 264M1613 313H1634M1613 361H1635"/>
            </g>

            <g id="cyl-slices"></g>
            <rect x="950" y="230" width="700" height="610" fill="url(#shade)" clip-path="url(#cyl-clip)"/>
            <path d="M1055.600 650.600L1551 248M1140.500 738.400L1625 321" stroke="#14181c" stroke-width="1"/>
            <polygon fill="#1f28a0" stroke="#101850" stroke-width="1" points="1055.600,650.600 1092.300,658.800 1119.900,677.100 1133.700,705.700 1140.500,738.400 1133.700,771 1117.600,799.600 1087.700,820 1055.600,826.100 1021.200,818 991.300,799.600 973,771 967,736.300 973.900,699.600 993.600,673.900 1018.900,658.800"/>

            <!-- cursor highlight -->
            <circle cx="1526" cy="406" r="14.500" fill="#d8904a" opacity=".92"/>
            <path d="M1545 405l0 13 3-3 3 6 3-1-3-6 4 0z" fill="#25cdb8" stroke="#123" stroke-width=".7"/>

            <!-- axis labels -->
            <text x="1408" y="238" text-anchor="middle">0</text>
            <text x="1145" y="400" text-anchor="middle">m</text>
            <text x="1165" y="422" text-anchor="middle">0.5</text>
            <text x="882" y="642" text-anchor="middle">1</text>
            <text x="877" y="685" text-anchor="middle">1</text>
            <text x="879" y="742" text-anchor="middle">0</text>
            <text x="878" y="800" text-anchor="middle">-1</text>
            <text x="835" y="747" text-anchor="middle">×10<tspan class="sup" dy="-5">-3</tspan><tspan dy="5"> m</tspan></text>
            <text x="997" y="920" text-anchor="middle">-1</text>
            <text x="1055" y="920" text-anchor="middle">0</text>
            <text x="1112" y="921" text-anchor="middle">1</text>
            <text x="1048" y="947" text-anchor="middle">×10<tspan class="sup" dy="-5">-3</tspan><tspan dy="5"> m</tspan></text>

            <!-- axis triad -->
            <path d="M803 908V884" stroke="#5aa05a" stroke-width="2"/><path d="M803 878l-3 8h6z" fill="#5aa05a"/>
            <path d="M803 908h22" stroke="#d0405c" stroke-width="2"/><path d="M833 908l-9-3v6z" fill="#d0405c"/>
            <circle cx="800" cy="910" r="3" fill="#5a7fb0"/>
            <text x="802" y="874" text-anchor="middle">y</text><text x="840" y="912" text-anchor="middle">x</text><text x="796" y="918" text-anchor="middle">z</text>

            <!-- colour legend -->
            <rect x="1846" y="180" width="16" height="735" fill="url(#cbar)" stroke="#50606a" stroke-width=".6"/>
            <g stroke="#333"><path d="M1846 322h2M1860 322h2M1846 537h2M1860 537h2M1846 750.500h2M1860 750.500h2"/></g>
            <text class="big" x="1871" y="327">46.4</text>
            <text class="big" x="1871" y="541">46.3</text>
            <text class="big" x="1871" y="755">46.2</text>
          </svg>
        </div>
      </section>

      <section class="cs-pane cs-msgpane d-flex flex-column">
        <ul class="nav nav-tabs cs-tabs">
          <li class="nav-item"><a class="nav-link active" href="#">消息<span class="cs-x">×</span></a></li>
          <li class="nav-item"><a class="nav-link" href="#">进度</a></li>
          <li class="nav-item"><a class="nav-link" href="#">日志</a></li>
          <li class="nav-item"><a class="nav-link" href="#">表格<span class="cs-x">×</span></a></li>
          <li class="cs-pins d-flex align-items-center"><span class="cs-caret"></span><svg class="cs-pin"><use href="#pin"/></svg></li>
        </ul>
        <div class="cs-strip"><i></i></div>
      </section>
    </div>
  </main>

  <footer class="cs-status flex-shrink-0">1.5 GB | 1.62 GB</footer>

  <!-- windows taskbar -->
  <div class="cs-task d-flex align-items-center flex-shrink-0">
    <span class="cs-ts lead"><svg><use href="#b-win"/></svg></span>
    <span class="cs-ts lead"><svg><use href="#b-find"/></svg></span>
    <span class="cs-ts lead"><svg><use href="#b-tv"/></svg></span>
    <span class="cs-ts first open"><svg><use href="#b-edge"/></svg></span>
    <span class="cs-ts"><svg><use href="#b-leaf"/></svg></span>
    <span class="cs-ts"><svg><use href="#b-sg"/></svg></span>
    <span class="cs-ts"><svg><use href="#b-tr"/></svg></span>
    <span class="cs-ts"><svg><use href="#b-bd"/></svg></span>
    <span class="cs-ts"><svg><use href="#b-fd"/></svg></span>
    <span class="cs-ts"><svg><use href="#b-wb"/></svg></span>
    <span class="cs-ts"><svg><use href="#b-og"/></svg></span>
    <span class="cs-ts open"><svg><use href="#b-rg"/></svg></span>
    <span class="cs-ts open"><svg><use href="#b-wc"/></svg></span>
    <span class="cs-ts cur"><svg><use href="#b-cm"/></svg></span>
    <span class="cs-ts open"><svg><use href="#b-tr"/></svg></span>
    <div class="cs-clock d-flex align-items-center">
      <svg class="cs-tray" viewBox="0 0 20 20"><path d="M3 15c0-3 3-3 3-1s-3 3-3 1zM6 14l6-11 3 2-7 10M14 9l3 2" fill="none" stroke="#d8dad6" stroke-width="1.300"/></svg>
      <div>11:25<br>2024/5/31</div>
    </div>
  </div>
</div>

<script>
    // Cylinder: stack of cross sections painted from the far end to the near end
    const front = [[1.6,-87.4],[38.3,-79.2],[65.9,-60.9],[79.7,-32.3],[86.5,0.4],[79.7,33],[63.6,61.6],[33.7,82],
                   [1.6,88.1],[-32.8,80],[-62.7,61.6],[-81,33],[-87,-1.7],[-80.1,-38.4],[-60.4,-64.1],[-35.1,-79.2]];
    const F = [1054, 738], B = [1550, 322];
    const stops = [
        [0, [31,40,160]], [.025, [36,80,200]], [.055, [42,168,216]], [.085, [85,190,160]], [.12, [205,200,20]],
        [.155, [212,170,16]], [.19, [216,110,12]], [.23, [214,62,8]], [.28, [208,44,5]], [.34, [178,34,4]], [.45, [134,22,4]],
        [.76, [134,22,4]], [.84, [204,44,5]], [.89, [216,110,12]], [.926, [205,200,20]], [.95, [90,190,150]],
        [.968, [42,168,216]], [.985, [36,80,200]], [1, [31,40,160]]
    ];

    function colourAt(t) {
        for (let i = 1; i < stops.length; i++) {
            if (t <= stops[i][0]) {
                const a = stops[i - 1], b = stops[i];
                const k = (t - a[0]) / (b[0] - a[0]);
                return "rgb(" + a[1].map((v, j) => Math.round(v + (b[1][j] - v) * k)).join(",") + ")";
            }
        }
        return "rgb(31,40,160)";
    }

    const NS = "http://www.w3.org/2000/svg";
    const slices = document.getElementById("cyl-slices");
    const clip = document.getElementById("cyl-clip");
    const N = 320;
    for (let i = N; i >= 0; i--) {
        const t = i / N, s = 1 - 0.15 * t;
        const cx = F[0] + (B[0] - F[0]) * t, cy = F[1] + (B[1] - F[1]) * t;
        const pts = front.map(p => (cx + p[0] * s).toFixed(1) + "," + (cy + p[1] * s).toFixed(1)).join(" ");
        const poly = document.createElementNS(NS, "polygon");
        poly.setAttribute("points", pts);
        poly.setAttribute("fill", colourAt(t));
        slices.appendChild(poly);
        clip.appendChild(poly.cloneNode());
    }
</script>
<script src="https://cdn.jsdelivr.net/npm/bootstrap@5.3.3/dist/js/bootstrap.bundle.min.js"></script>
</body>
</html>
